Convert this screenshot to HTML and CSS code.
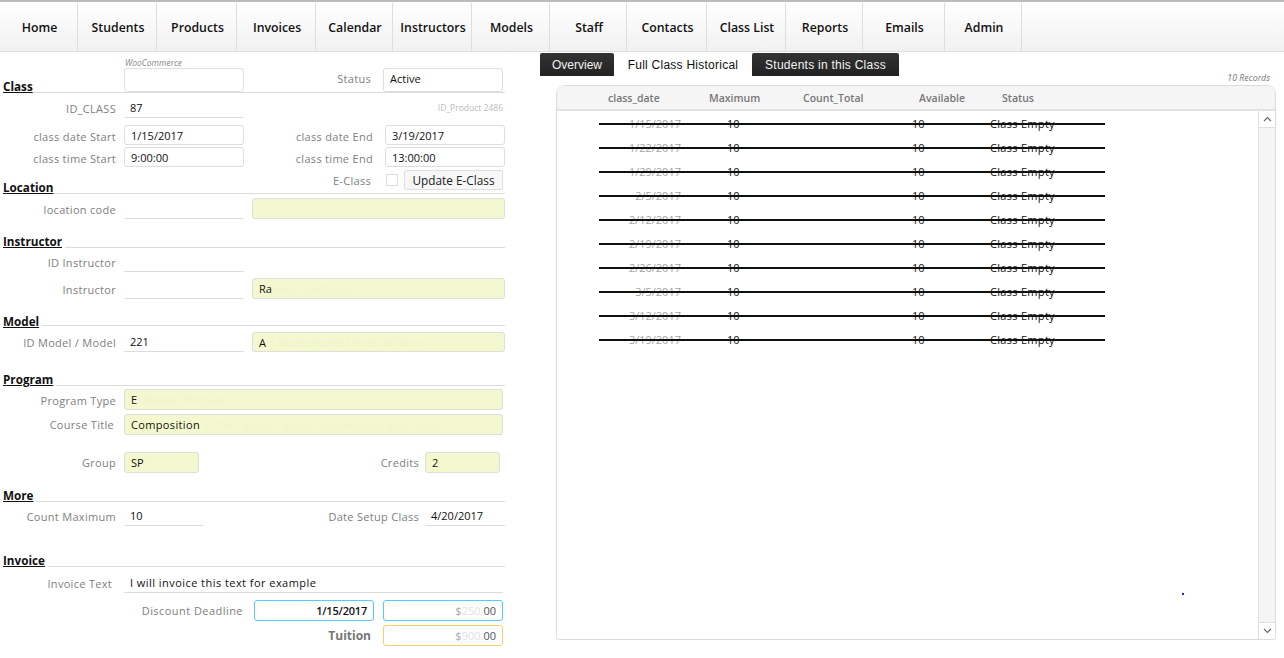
FILE: index.html
```html
<!DOCTYPE html>
<html lang="en">
<head>
<meta charset="utf-8">
<title>Class</title>
<link rel="stylesheet" href="styles.css">
</head>
<body>
<nav class="nav">
  <a class="n">Home</a><a class="n">Students</a><a class="n">Products</a><a class="n">Invoices</a><a class="n">Calendar</a><a class="n">Instructors</a><a class="n">Models</a><a class="n">Staff</a><a class="n">Contacts</a><a class="n">Class List</a><a class="n">Reports</a><a class="n">Emails</a><a class="n">Admin</a>
</nav>
<main class="main">
  <form class="form">
    <div class="woo">WooCommerce</div>
    <div class="row head h25">
      <span class="title w121">Class</span>
      <div class="box w120"></div>
      <label class="lab w127">Status</label>
      <div class="box w120 ml12">Active</div>
    </div>
    <div class="row u h20 mt5 rel">
      <label class="lab0">ID_CLASS</label>
      <div class="line w120">87</div>
      <span class="idp">ID_Product 2486</span>
    </div>
    <div class="row low h20 mt7">
      <label class="lab0">class date Start</label>
      <div class="box w120">1/15/2017</div>
      <label class="lab w129">class date End</label>
      <div class="box w120 ml12">3/19/2017</div>
    </div>
    <div class="row low h20 mt2">
      <label class="lab0">class time Start</label>
      <div class="box w120">9:00:00</div>
      <label class="lab w129">class time End</label>
      <div class="box w120 ml12">13:00:00</div>
    </div>
    <div class="row head h24 mt3">
      <span class="title w121">Location</span>
      <div class="w120"></div>
      <label class="lab w127">E-Class</label>
      <div class="check"></div>
      <div class="btn">Update E-Class</div>
    </div>
    <div class="row u h21 mt4">
      <label class="lab0">location code</label>
      <div class="line w120"></div>
      <div class="box yellow w253 ml8"></div>
    </div>
    <div class="row head h20 mt9"><span class="title">Instructor</span></div>
    <div class="row u h24">
      <label class="lab0">ID Instructor</label>
      <div class="line w120"></div>
    </div>
    <div class="row u h21 mt6">
      <label class="lab0">Instructor</label>
      <div class="line w120"></div>
      <div class="box yellow w253 ml8">Ra<span class="ghost">ndom Instructor</span></div>
    </div>
    <div class="row head h20 mt7"><span class="title title-low">Model</span></div>
    <div class="row u h20 mt6">
      <label class="lab0">ID Model / Model</label>
      <div class="line w120">221</div>
      <div class="box yellow w253 ml8">A<span class="ghost">rt Model Name Here Full Name</span></div>
    </div>
    <div class="row head h20 mt14"><span class="title">Program</span></div>
    <div class="row low h21 mt3">
      <label class="lab0">Program Type</label>
      <div class="box yellow w379">E<span class="ghost">xtension Program</span></div>
    </div>
    <div class="row h21 mt4">
      <label class="lab0 pr2">Course Title</label>
      <div class="box yellow w379 sp">Composition <span class="ghost">2 The Figure, Figure Composition and Color</span></div>
    </div>
    <div class="row h21 mt17">
      <label class="lab0">Group</label>
      <div class="box yellow w75">SP<span class="ghost">17</span></div>
      <label class="lab w220">Credits</label>
      <div class="box yellow w75 ml6">2</div>
    </div>
    <div class="row head h20 mt9"><span class="title">More</span></div>
    <div class="row u h24">
      <label class="lab0">Count Maximum</label>
      <div class="line w80">10</div>
      <label class="lab w215">Date Setup Class</label>
      <div class="line w80 ml6">4/20/2017</div>
    </div>
    <div class="row head h20 mt21"><span class="title">Invoice</span></div>
    <div class="row u h26">
      <label class="lab0 pr4">Invoice Text</label>
      <div class="line w379 sp2">I will invoice this text for example</div>
    </div>
    <div class="row h21 mt7">
      <label class="lab0 lab-wide">Discount Deadline</label>
      <div class="box blue w120 right strong">1/15/2017</div>
      <div class="box blue w120 ml9 right"><span class="sym">$</span><span class="ghost2">250.</span><span class="ghost3">00</span></div>
    </div>
    <div class="row h21 mt4">
      <label class="lab0 lab-total">Tuition</label>
      <div class="box orange w120 right"><span class="sym">$</span><span class="ghost2">900.</span><span class="ghost3">00</span></div>
    </div>
  </form>
  <section class="panel">
    <div class="tabs">
      <a class="tab dark t1">Overview</a><a class="tab t2">Full Class Historical</a><a class="tab dark t3">Students in this Class</a>
    </div>
    <div class="records">10 Records</div>
    <div class="grid">
      <div class="ghead">
        <span class="c1 th">class_date</span><span class="c2 th">Maximum</span><span class="c3 th">Count_Total</span><span class="c4 th">Available</span><span class="c5 th">Status</span>
      </div>
      <div class="gbody">
        <div class="rows">
          <div class="tr"><span class="c1">1/15/2017</span><span class="c2">10</span><span class="c3"></span><span class="c4">10</span><span class="c5">Class Empty</span></div>
          <div class="tr"><span class="c1">1/22/2017</span><span class="c2">10</span><span class="c3"></span><span class="c4">10</span><span class="c5">Class Empty</span></div>
          <div class="tr"><span class="c1">1/29/2017</span><span class="c2">10</span><span class="c3"></span><span class="c4">10</span><span class="c5">Class Empty</span></div>
          <div class="tr"><span class="c1">2/5/2017</span><span class="c2">10</span><span class="c3"></span><span class="c4">10</span><span class="c5">Class Empty</span></div>
          <div class="tr"><span class="c1">2/12/2017</span><span class="c2">10</span><span class="c3"></span><span class="c4">10</span><span class="c5">Class Empty</span></div>
          <div class="tr"><span class="c1">2/19/2017</span><span class="c2">10</span><span class="c3"></span><span class="c4">10</span><span class="c5">Class Empty</span></div>
          <div class="tr"><span class="c1">2/26/2017</span><span class="c2">10</span><span class="c3"></span><span class="c4">10</span><span class="c5">Class Empty</span></div>
          <div class="tr"><span class="c1">3/5/2017</span><span class="c2">10</span><span class="c3"></span><span class="c4">10</span><span class="c5">Class Empty</span></div>
          <div class="tr"><span class="c1">3/12/2017</span><span class="c2">10</span><span class="c3"></span><span class="c4">10</span><span class="c5">Class Empty</span></div>
          <div class="tr"><span class="c1">3/19/2017</span><span class="c2">10</span><span class="c3"></span><span class="c4">10</span><span class="c5">Class Empty</span></div>
        </div>
        <span class="dot"></span>
        <div class="scroll">
          <div class="sbtn"><svg width="9" height="6" viewBox="0 0 9 6"><path d="M1 5l3.5-3.5L8 5" fill="none" stroke="#666" stroke-width="1.1"/></svg></div>
          <div class="strack"></div>
          <div class="sbtn bottom"><svg width="9" height="6" viewBox="0 0 9 6"><path d="M1 1l3.5 3.5L8 1" fill="none" stroke="#666" stroke-width="1.1"/></svg></div>
        </div>
      </div>
    </div>
  </section>
</main>
</body>
</html>
```
FILE: styles.css
```css
* { box-sizing: border-box; }
html, body { margin: 0; padding: 0; background: #fff; }
body { width: 1284px; height: 658px; overflow: hidden; font-family: "Open Sans", "Noto Sans", sans-serif; font-size: 11px; color: #111; }

.nav { display: grid; grid-template-columns: 78px 79px 80px 79px 77px 79px 78px 77px 80px 79px 77px 82px 77px 1fr; height: 52px; border-top: 2px solid #bcbcbc; border-bottom: 1px solid #dedede; padding-top: 1px; background: linear-gradient(#fff, #f1f1f1); }
.n { display: flex; align-items: center; justify-content: center; height: 48px; padding-left: 2px; border-right: 1px solid #dedede; font-size: 12.3px; font-weight: 600; color: #111; white-space: nowrap; }

.main { display: flex; align-items: flex-start; }
.form { width: 505px; flex: none; }
.woo { height: 16px; padding: 6px 0 0 125px; font-size: 8.5px; font-style: italic; color: #888; line-height: 10px; }
.row { display: flex; align-items: flex-start; }
.rel { position: relative; }
.head { margin-left: 3px; border-bottom: 1px solid #dcdcdc; }
.title { align-self: flex-end; margin-bottom: -2px; padding-right: 3px; background: #fff; font-size: 11.7px; font-weight: 700; text-decoration: underline; color: #111; line-height: 16px; white-space: nowrap; }
.title-low { margin-bottom: -4px; }
.w121 { width: 121px; flex: none; background: transparent; }

.h20 { height: 20px; } .h21 { height: 21px; } .h24 { height: 24px; } .h25 { height: 25px; } .h26 { height: 26px; }
.mt2 { margin-top: 2px; } .mt3 { margin-top: 3px; } .mt4 { margin-top: 4px; } .mt5 { margin-top: 5px; } .mt6 { margin-top: 6px; } .mt7 { margin-top: 7px; } .mt9 { margin-top: 9px; } .mt14 { margin-top: 14px; } .mt17 { margin-top: 17px; } .mt21 { margin-top: 21px; }
.ml6 { margin-left: 6px; } .ml8 { margin-left: 8px; } .ml9 { margin-left: 9px; } .ml12 { margin-left: 12px; }

.lab0, .lab { flex: none; font-size: 11px; letter-spacing: .3px; line-height: 22px; color: #808080; text-align: right; white-space: nowrap; }
.low .lab0, .low .lab { line-height: 24px; }
.u .lab0, .u .lab { align-self: flex-end; line-height: 18px; }
.lab0 { width: 116px; margin-right: 8px; }
.pr2 { padding-right: 2px; }
.pr4 { padding-right: 4px; }
.lab-wide { width: 243px; margin-right: 11px; letter-spacing: .45px; }
.lab-total { width: 371px; margin-right: 12px; font-size: 12px; letter-spacing: 0; font-weight: 700; color: #777; line-height: 22px; }
.w127 { width: 127px; } .w129 { width: 129px; } .w215 { width: 215px; } .w220 { width: 220px; }

.box, .line { flex: none; padding: 0 6px; font-size: 11px; color: #111; white-space: nowrap; overflow: hidden; }
.box { height: 100%; line-height: 19px; border: 1px solid #dedede; border-radius: 3px; background: #fff; }
.line { display: flex; align-items: flex-end; height: 100%; line-height: 19px; border-bottom: 1px solid #dcdcdc; }
.w120 { width: 120px; flex: none; }
.w80 { width: 80px; }
.w75 { width: 75px; }
.w253 { width: 253px; }
.w379 { width: 379px; }
.sp { letter-spacing: .35px; }
.sp2 { letter-spacing: .45px; }
.yellow { background: #f4f8cf; }
.blue { border-color: #4fcdfb; }
.orange { border-color: #f9d163; }
.right { text-align: right; }
.strong { font-weight: 600; letter-spacing: -.2px; }
.ghost { color: #f0f4d0; }
.sym { color: #aaa; }
.ghost2 { color: #e2e2e2; }
.ghost3 { color: #555; }
.idp { position: absolute; right: 2px; top: 0; font-size: 8.5px; line-height: 20px; color: #bbb; }
.check { flex: none; width: 12px; height: 12px; margin: 4px 6px 0 15px; border: 1px solid #dedede; }
.btn { flex: none; width: 99px; height: 20px; border: 1px solid #dedede; border-radius: 2px; background: #f7f7f7; font-size: 11.8px; line-height: 18px; text-align: center; color: #222; white-space: nowrap; }

.panel { width: 744px; flex: none; margin-left: 35px; }
.tabs { display: flex; height: 23px; margin-top: 1px; font-family: "Liberation Sans", Arial, sans-serif; font-size: 12px; }
.tab { display: flex; align-items: center; justify-content: center; color: #111; white-space: nowrap; }
.dark { background: linear-gradient(#333, #222); color: #f2f2f2; border-radius: 2px 2px 0 0; }
.t1 { width: 74px; }
.t2 { width: 138px; letter-spacing: .25px; }
.t3 { width: 147px; letter-spacing: .25px; }
.records { height: 10px; width: 730px; margin-top: -1px; font-size: 8.8px; font-style: italic; line-height: 6px; text-align: right; color: #777; }
.grid { width: 720px; height: 555px; margin-left: 16px; border: 1px solid #dcdcdc; border-radius: 9px 9px 3px 3px; overflow: hidden; }
.ghead { position: relative; height: 25px; background: #f5f5f5; border-bottom: 2px solid #e2e2e2; }
.th { position: absolute; top: 0; font-size: 10.5px; font-weight: 600; line-height: 25px; color: #777; white-space: nowrap; }
.th.c1 { left: 51px; } .th.c2 { left: 152px; } .th.c3 { left: 246px; } .th.c4 { left: 362px; } .th.c5 { left: 445px; }
.gbody { position: relative; display: flex; height: 528px; }
.rows { flex: 1; }
.tr { position: relative; height: 24px; line-height: 25px; font-size: 11px; }
.tr::after { content: ""; position: absolute; left: 42px; top: 12px; width: 506px; height: 2px; background: #111; }
.tr span { position: absolute; top: 0; white-space: nowrap; }
.tr .c1 { right: 577px; color: #a5a5a5; }
.tr .c2 { left: 170px; }
.tr .c4 { left: 355px; }
.tr .c5 { left: 433px; letter-spacing: .3px; }
.dot { position: absolute; left: 625px; top: 482px; width: 2px; height: 2px; background: #2222cc; }
.scroll { flex: none; display: flex; flex-direction: column; width: 17px; border-left: 1px solid #e0e0e0; }
.sbtn { flex: none; display: flex; align-items: center; justify-content: center; height: 17px; background: #fff; border-bottom: 1px solid #e0e0e0; }
.sbtn.bottom { border-bottom: 0; border-top: 1px solid #e0e0e0; }
.strack { flex: 1; background: #f5f5f5; }
```
